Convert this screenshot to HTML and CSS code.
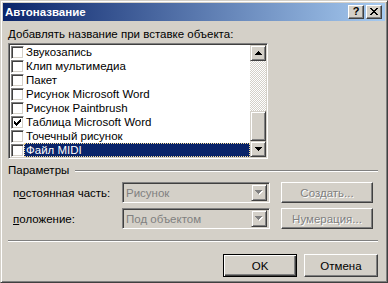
FILE: index.html
```html
<!DOCTYPE html>
<html lang="ru">
<head>
    <meta charset="UTF-8">
    <title>Автоназвание</title>
    <link rel="stylesheet" href="styles.css">
</head>
<body>
<div class="window">
    <div class="titlebar">
        <span class="title">Автоназвание</span>
        <div class="caption-buttons">
            <span class="cap-btn help">?</span>
            <span class="cap-btn close">
                <svg width="8" height="7" shape-rendering="crispEdges"><path fill="#000" d="M0 0h2v1h-2z M6 0h2v1h-2z M1 1h2v1h-2z M5 1h2v1h-2z M2 2h4v1h-4z M3 3h2v1h-2z M2 4h4v1h-4z M1 5h2v1h-2z M5 5h2v1h-2z M0 6h2v1h-2z M6 6h2v1h-2z"/></svg>
            </span>
        </div>
    </div>

    <div class="content">
        <div class="list-label"><u>Д</u>обавлять название при вставке объекта:</div>

        <div class="listbox">
            <div class="items">
                <div class="item"><span class="check"></span><span class="text">Звукозапись</span></div>
                <div class="item"><span class="check"></span><span class="text">Клип мультимедиа</span></div>
                <div class="item"><span class="check"></span><span class="text">Пакет</span></div>
                <div class="item"><span class="check"></span><span class="text">Рисунок Microsoft Word</span></div>
                <div class="item"><span class="check"></span><span class="text">Рисунок Paintbrush</span></div>
                <div class="item"><span class="check">
                    <svg width="7" height="7" shape-rendering="crispEdges"><path fill="#000" d="M0 2h1v3h-1z M1 3h1v3h-1z M2 4h1v3h-1z M3 3h1v3h-1z M4 2h1v3h-1z M5 1h1v3h-1z M6 0h1v3h-1z"/></svg>
                </span><span class="text">Таблица Microsoft Word</span></div>
                <div class="item"><span class="check"></span><span class="text">Точечный рисунок</span></div>
                <div class="item selected"><span class="check"></span><span class="text">Файл MIDI</span></div>
            </div>
            <div class="scrollbar">
                <div class="sb-btn">
                    <svg width="7" height="4" shape-rendering="crispEdges"><path fill="#000" d="M3 0h1v1h-1z M2 1h3v1h-3z M1 2h5v1h-5z M0 3h7v1h-7z"/></svg>
                </div>
                <div class="sb-track"><div class="sb-thumb"></div></div>
                <div class="sb-btn">
                    <svg width="7" height="4" shape-rendering="crispEdges"><path fill="#000" d="M0 0h7v1h-7z M1 1h5v1h-5z M2 2h3v1h-3z M3 3h1v1h-1z"/></svg>
                </div>
            </div>
        </div>

        <div class="section">
            <span>Параметры</span>
            <div class="etched"></div>
        </div>

        <div class="param-row">
            <label>п<u>о</u>стоянная часть:</label>
            <div class="combo">
                <span class="combo-value">Рисунок</span>
                <div class="combo-btn">
                    <svg width="8" height="5" shape-rendering="crispEdges"><path fill="#fff" d="M1 1h7v1h-7z M2 2h5v1h-5z M3 3h3v1h-3z M4 4h1v1h-1z"/><path fill="#808080" d="M0 0h7v1h-7z M1 1h5v1h-5z M2 2h3v1h-3z M3 3h1v1h-1z"/></svg>
                </div>
            </div>
            <button class="btn disabled">Создать...</button>
        </div>

        <div class="param-row">
            <label><u>п</u>оложение:</label>
            <div class="combo">
                <span class="combo-value">Под объектом</span>
                <div class="combo-btn">
                    <svg width="8" height="5" shape-rendering="crispEdges"><path fill="#fff" d="M1 1h7v1h-7z M2 2h5v1h-5z M3 3h3v1h-3z M4 4h1v1h-1z"/><path fill="#808080" d="M0 0h7v1h-7z M1 1h5v1h-5z M2 2h3v1h-3z M3 3h1v1h-1z"/></svg>
                </div>
            </div>
            <button class="btn disabled">Нумерация...</button>
        </div>

        <div class="etched bottom-line"></div>

        <div class="actions">
            <button class="btn action default">OK</button>
            <button class="btn action">Отмена</button>
        </div>
    </div>
</div>
</body>
</html>
```

FILE: styles.css
```css
* {
    margin: 0;
    padding: 0;
    box-sizing: border-box;
}

body {
    background-color: #d4d0c8;
    font-family: "Liberation Sans", Arial, sans-serif;
    font-size: 11.5px;
    color: #000;
}

u {
    text-decoration: underline;
    text-underline-offset: 1px;
}

/* рамка окна */
.window {
    width: 388px;
    height: 283px;
    background-color: #d4d0c8;
    border: 1px solid;
    border-color: #d4d0c8 #404040 #404040 #d4d0c8;
    box-shadow: inset 1px 1px #fff, inset -1px -1px #808080;
    padding: 2px;
    display: flex;
    flex-direction: column;
}

.titlebar {
    height: 18px;
    background: linear-gradient(to right, #0a246a, #a6caf0);
    display: flex;
    align-items: center;
    justify-content: space-between;
    padding: 0 3px 0 2px;
}

.title {
    color: #fff;
    font-weight: bold;
    font-size: 11.5px;
}

.caption-buttons {
    display: flex;
    gap: 2px;
}

.cap-btn {
    width: 16px;
    height: 14px;
    background-color: #d4d0c8;
    border: 1px solid;
    border-color: #fff #404040 #404040 #fff;
    box-shadow: inset -1px -1px #808080;
    display: flex;
    align-items: center;
    justify-content: center;
    padding-bottom: 1px;
}

.help {
    font-weight: bold;
    font-size: 11px;
    line-height: 11px;
}

/* содержимое */
.content {
    padding: 0 7px 0 5px;
    display: flex;
    flex-direction: column;
}

.list-label {
    margin-top: 7px;
    line-height: 13px;
}

.listbox {
    margin-top: 2px;
    width: 260px;
    height: 116px;
    background-color: #fff;
    border: 1px solid;
    border-color: #808080 #fff #fff #808080;
    box-shadow: inset 1px 1px #404040, inset -1px -1px #d4d0c8;
    padding: 1px;
    display: flex;
}

.items {
    flex: 1;
}

.item {
    height: 14px;
    display: flex;
    align-items: center;
}

.check {
    width: 13px;
    height: 13px;
    margin-left: 1px;
    background-color: #fff;
    border: 1px solid;
    border-color: #808080 #fff #fff #808080;
    box-shadow: inset 1px 1px #404040, inset -1px -1px #d4d0c8;
    display: flex;
    align-items: center;
    justify-content: center;
}

.item .text {
    flex: 1;
    height: 14px;
    line-height: 14px;
    padding-left: 2px;
    white-space: nowrap;
}

.item.selected .text {
    background-color: #0a246a;
    color: #fff;
    outline: 1px dotted #f5db95;
    outline-offset: -1px;
}

/* полоса прокрутки */
.scrollbar {
    width: 16px;
    display: flex;
    flex-direction: column;
}

.sb-btn,
.sb-thumb,
.combo-btn {
    background-color: #d4d0c8;
    border: 1px solid;
    border-color: #d4d0c8 #404040 #404040 #d4d0c8;
    box-shadow: inset 1px 1px #fff, inset -1px -1px #808080;
    display: flex;
    align-items: center;
    justify-content: center;
}

.sb-btn {
    height: 16px;
}

.sb-track {
    flex: 1;
    display: flex;
    flex-direction: column;
    justify-content: flex-end;
    background: repeating-conic-gradient(#fff 0 25%, #d4d0c8 0 50%) 0 0 / 2px 2px;
}

.sb-thumb {
    height: 30px;
}

/* параметры */
.section {
    margin-top: 5px;
    line-height: 13px;
    display: flex;
    align-items: center;
    gap: 6px;
}

.etched {
    height: 2px;
    flex: 1;
    border-top: 1px solid #808080;
    border-bottom: 1px solid #fff;
}

.param-row {
    margin-top: 5px;
    height: 21px;
    padding-left: 5px;
    display: flex;
    align-items: center;
}

.param-row label {
    width: 109px;
}

.combo {
    width: 148px;
    height: 21px;
    border: 1px solid;
    border-color: #808080 #fff #fff #808080;
    box-shadow: inset 1px 1px #404040, inset -1px -1px #d4d0c8;
    padding: 2px;
    display: flex;
    align-items: center;
}

.combo-value {
    flex: 1;
    color: #808080;
    padding-left: 1px;
}

.combo-btn {
    width: 16px;
    height: 17px;
}

.btn {
    font-family: inherit;
    font-size: 11.5px;
    background-color: #d4d0c8;
    border: 1px solid;
    border-color: #fff #404040 #404040 #fff;
    box-shadow: inset -1px -1px #808080;
    color: #000;
}

.param-row .btn {
    margin-left: 11px;
    width: 92px;
    height: 21px;
}

.btn.disabled {
    color: #808080;
    text-shadow: 1px 1px #fff;
}

.bottom-line {
    flex: none;
    margin-top: 11px;
}

.actions {
    margin-top: 12px;
    display: flex;
    justify-content: flex-end;
    gap: 7px;
}

.btn.action {
    width: 74px;
    height: 23px;
}

.btn.default {
    border-color: #000;
    box-shadow: inset 1px 1px #fff, inset -1px -1px #404040, inset -2px -2px #808080;
}
```
